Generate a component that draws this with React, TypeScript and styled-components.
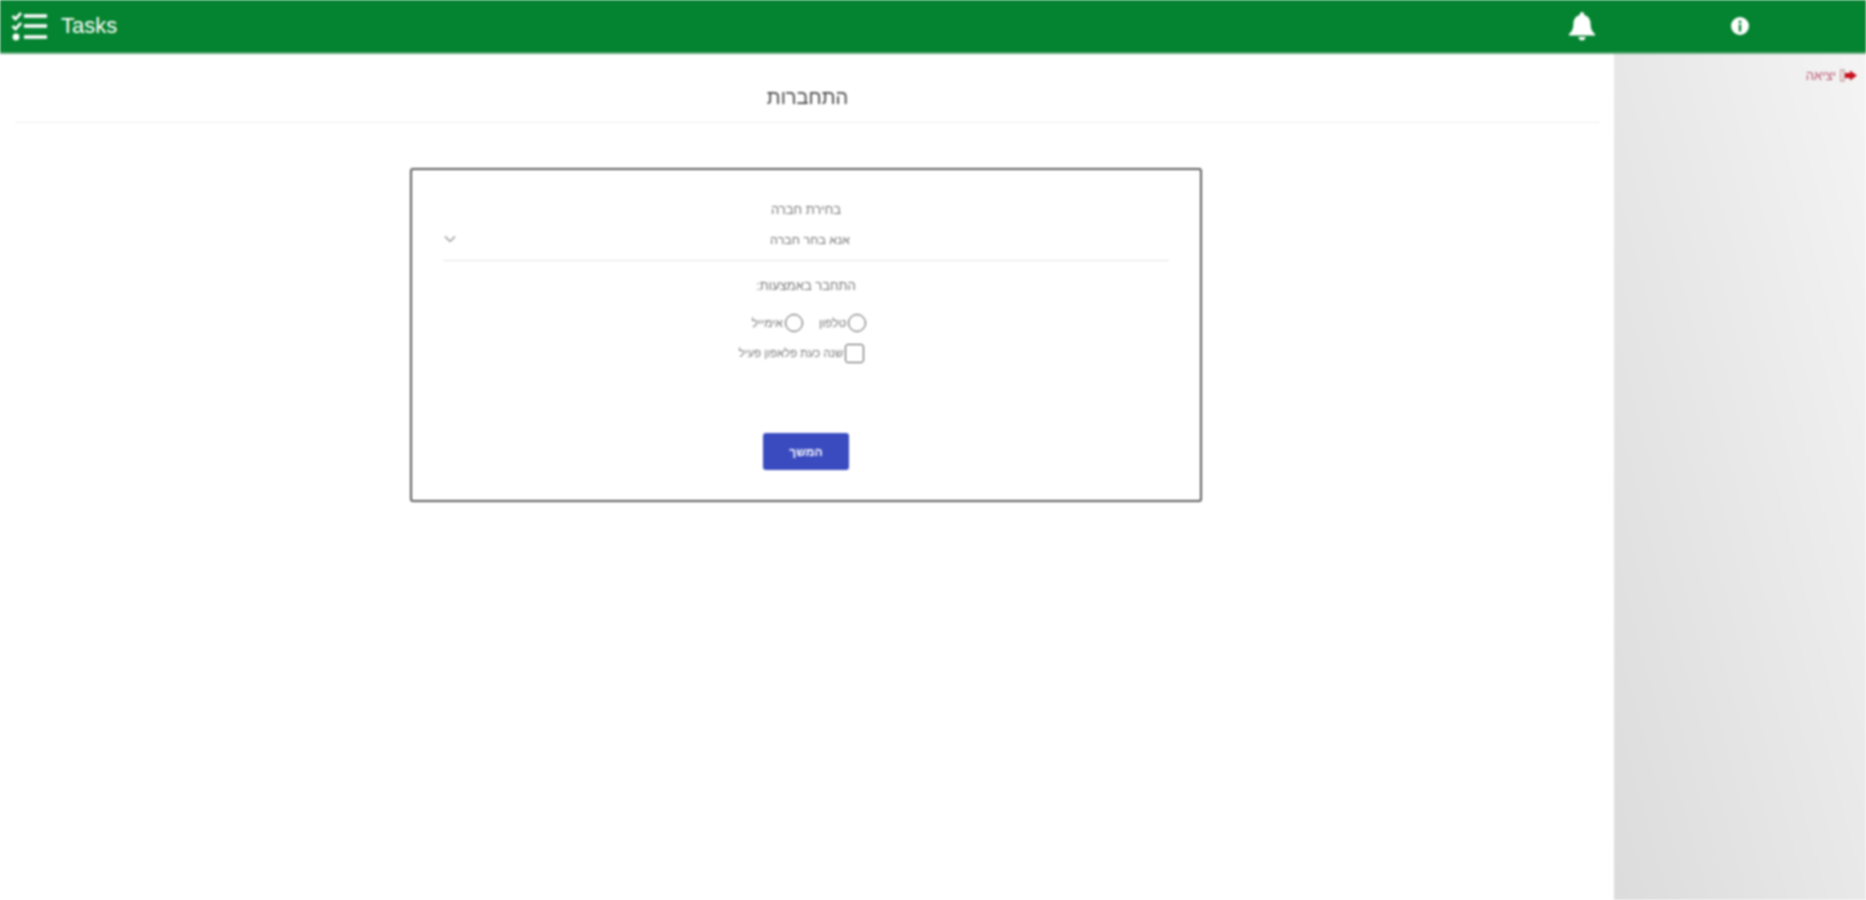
import React from "react";
import styled, { createGlobalStyle } from "styled-components";

const Global = createGlobalStyle`
  html, body { margin: 0; padding: 0; background: #fff; }
  body { font-family: "Liberation Sans", Arial, sans-serif; overflow: hidden; }
`;

const Page = styled.div`
  width: 1866px;
  height: 900px;
  display: flex;
  flex-direction: column;
  overflow: hidden;
  filter: blur(0.9px);
`;

const TopBar = styled.header`
  flex: 0 0 54px;
  box-sizing: border-box;
  background: #048330;
  border-bottom: 2px solid #5fa878;
  display: flex;
  align-items: center;
  color: #fff;
  padding-left: 11px;
`;

const Brand = styled.div`
  display: flex;
  align-items: center;
  gap: 13px;
  font-size: 22px;
  flex: 1;
`;

const BellSlot = styled.div`
  width: 40px;
  display: flex;
  justify-content: center;
  margin-right: 118px;
`;

const InfoSlot = styled.div`
  width: 40px;
  display: flex;
  justify-content: center;
  margin-right: 106px;
`;

const Body = styled.div`
  flex: 1;
  display: flex;
  min-height: 0;
`;

const Main = styled.main`
  width: 1614px;
  box-sizing: border-box;
  padding: 0 14px 0 15px;
  direction: rtl;
  display: flex;
  flex-direction: column;
  align-items: center;
`;

const Title = styled.h1`
  align-self: stretch;
  margin: 0;
  height: 69px;
  box-sizing: border-box;
  padding-top: 31px;
  text-align: center;
  font-size: 20px;
  line-height: 24px;
  font-weight: 400;
  color: #4a4a4a;
  border-bottom: 1px solid #eeeeee;
`;

const Card = styled.section`
  margin: 45px 3px 0 0;
  width: 792px;
  height: 334px;
  box-sizing: border-box;
  border: 2px solid #5c5c5c;
  border-radius: 3px;
  padding: 31px 31px 0;
  display: flex;
  flex-direction: column;
  align-items: center;
`;

const FieldLabel = styled.label`
  font-size: 13px;
  line-height: 18px;
  color: #777;
`;

const Select = styled.div`
  align-self: stretch;
  height: 39px;
  margin-top: 3px;
  border-bottom: 1px solid #e4e4e4;
  box-sizing: border-box;
  display: flex;
  align-items: center;
  justify-content: center;
  position: relative;
  font-size: 12.5px;
  color: #777;
  padding: 0 0 3px 8px;
`;

const Chevron = styled.svg`
  position: absolute;
  left: 1px;
  top: 13px;
`;

const Prompt = styled.div`
  margin-top: 16px;
  font-size: 13px;
  line-height: 18px;
  color: #777;
`;

const RadioRow = styled.div`
  margin: 16px 0 0 6px;
  display: flex;
  align-items: center;
  gap: 16px;
  height: 24px;
`;

const Option = styled.label`
  display: flex;
  align-items: center;
  gap: 2px;
  font-size: 12px;
  color: #777;
`;

const RadioMark = styled.span`
  width: 18px;
  height: 18px;
  box-sizing: border-box;
  border: 1.5px solid #555;
  border-radius: 50%;
  display: block;
`;

const CheckRow = styled.label`
  margin: 6px 9px 0 0;
  display: flex;
  align-items: center;
  gap: 2px;
  font-size: 11.3px;
  color: #777;
  height: 24px;
`;

const CheckMark = styled.span`
  width: 19px;
  height: 19px;
  box-sizing: border-box;
  border: 1.5px solid #555;
  border-radius: 3px;
  display: block;
`;

const PrimaryButton = styled.button`
  margin-top: 68px;
  width: 86px;
  height: 37px;
  border: none;
  border-radius: 3px;
  background: #3a4bc0;
  color: #fff;
  font-family: inherit;
  font-size: 12px;
  font-weight: 700;
`;

const Side = styled.aside`
  width: 252px;
  background: linear-gradient(75deg, #dcdcdc 0%, #f4f4f4 100%);
  direction: rtl;
  box-sizing: border-box;
  padding: 14px 9px 0 0;
  display: flex;
  align-items: flex-start;
`;

const Logout = styled.div`
  display: flex;
  align-items: center;
  gap: 4px;
  font-size: 13px;
  line-height: 15px;
  color: #b9566c;
`;

const TasksIcon = () => (
  <svg width="37" height="30" viewBox="0 0 37 30" fill="none" stroke="#fff">
    <path d="M1.500 5l3 3L10 2" strokeWidth="2.600" />
    <path d="M1.500 15l3 3L10 12" strokeWidth="2.600" />
    <circle cx="5" cy="26" r="3.400" fill="#fff" stroke="none" />
    <path d="M13 5h23M13 15h23M13 26h23" strokeWidth="3.600" />
  </svg>
);

const BellIcon = () => (
  <svg width="28" height="30" viewBox="0 0 28 30" fill="#fff">
    <path d="M14 1c-1.300 0-2.200 1-2.200 2.200v.8C7.600 5 5.400 8.600 5.400 12.600c0 5.400-1.400 8-4.400 10.400v1.600h26V23c-3-2.400-4.400-5-4.400-10.400 0-4-2.200-7.600-6.400-8.600v-.8C16.200 2 15.300 1 14 1z" />
    <path d="M10.500 26h7c0 2.200-1.500 3.600-3.500 3.600S10.500 28.200 10.500 26z" />
  </svg>
);

const InfoIcon = () => (
  <svg width="20" height="20" viewBox="0 0 20 20">
    <circle cx="10" cy="10" r="9" fill="#fff" />
    <circle cx="10" cy="6" r="1.400" fill="#048330" />
    <rect x="8.800" y="8.500" width="2.400" height="7" fill="#048330" />
  </svg>
);

const ExitIcon = () => (
  <svg width="17" height="13" viewBox="0 0 17 13">
    <rect x="0.500" y="1" width="3.500" height="11" fill="none" stroke="#c9a0a0" strokeWidth="1.400" />
    <path d="M5 4h5V1.500l7 5-7 5V9H5z" fill="#c80f1e" />
  </svg>
);

export default function App() {
  return (
    <Page>
      <Global />
      <TopBar>
        <Brand>
          <TasksIcon />
          <span>Tasks</span>
        </Brand>
        <BellSlot>
          <BellIcon />
        </BellSlot>
        <InfoSlot>
          <InfoIcon />
        </InfoSlot>
      </TopBar>
      <Body>
        <Main>
          <Title>התחברות</Title>
          <Card>
            <FieldLabel>בחירת חברה</FieldLabel>
            <Select>
              אנא בחר חברה
              <Chevron width="12" height="8" viewBox="0 0 12 8" fill="none" stroke="#888" strokeWidth="1.200">
                <path d="M1 1.500l5 5 5-5" />
              </Chevron>
            </Select>
            <Prompt>התחבר באמצעות:</Prompt>
            <RadioRow>
              <Option>
                <RadioMark />
                טלפון
              </Option>
              <Option>
                <RadioMark />
                אימייל
              </Option>
            </RadioRow>
            <CheckRow>
              <CheckMark />
              שנה כעת פלאפון פעיל
            </CheckRow>
            <PrimaryButton type="button">המשך</PrimaryButton>
          </Card>
        </Main>
        <Side>
          <Logout>
            <ExitIcon />
            יציאה
          </Logout>
        </Side>
      </Body>
    </Page>
  );
}
